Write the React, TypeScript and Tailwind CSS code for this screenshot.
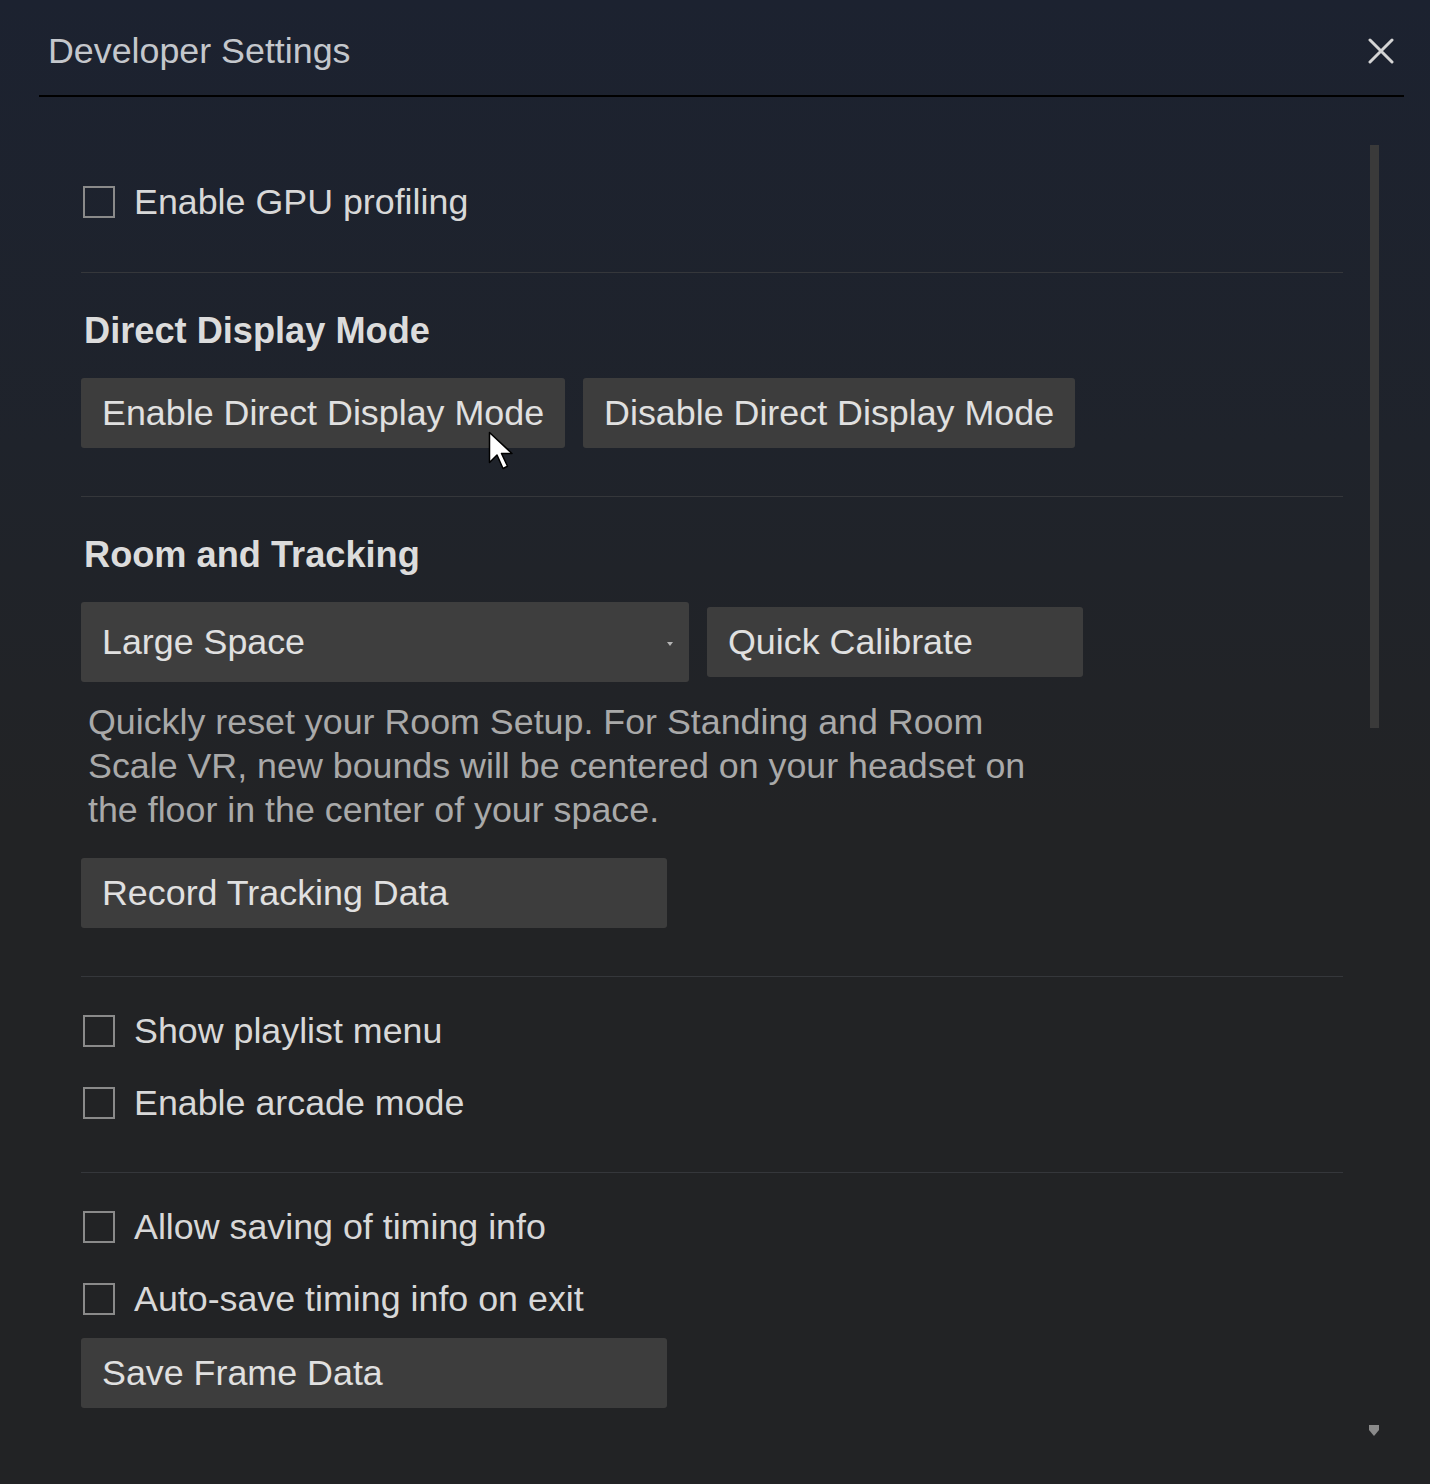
const Checkbox = ({ label }: { label: string }) => (
  <label className="flex h-[40px] items-center gap-[19px]">
    <span className="ml-[2px] block h-[32px] w-[32px] shrink-0 border-2 border-[#8a8a8a]" />
    <span className="text-[35.8px] leading-[40px] text-[#d8d8d8]">{label}</span>
  </label>
);

const Button = ({ label, className = "" }: { label: string; className?: string }) => (
  <button
    type="button"
    className={`flex h-[70px] items-center rounded-[3px] bg-[#3d3d3d] px-[21px] text-left text-[35.85px] leading-[40px] text-[#e0e0e0] ${className}`}
  >
    {label}
  </button>
);

const Divider = ({ className = "" }: { className?: string }) => (
  <div className={`h-px w-full bg-[#35373b] ${className}`} />
);

const Heading = ({ children, className = "" }: { children: string; className?: string }) => (
  <h2 className={`pl-[3px] text-[36.2px] font-bold leading-[41px] text-[#dcdcdc] ${className}`}>{children}</h2>
);

export default function App() {
  return (
    <div className="relative h-[1484px] w-[1430px] overflow-hidden bg-[linear-gradient(180deg,#1c2230_0%,#1f232b_30%,#222325_55%,#222325_100%)] font-['Liberation_Sans',Arial,sans-serif]">
      {/* header */}
      <div className="ml-[39px] mr-[26px] flex h-[97px] items-start justify-between border-b-2 border-black">
        <h1 className="pl-[9px] pt-[31px] text-[35.8px] leading-[41px] text-[#c4c7cc]">Developer Settings</h1>
        <button type="button" className="mr-[10px] mt-[38px] text-[#d4d4d4]">
          <svg width="26" height="26" viewBox="0 0 26 26" fill="none" stroke="currentColor" strokeWidth="3" strokeLinecap="round">
            <path d="M2 2 L24 24 M24 2 L2 24" />
          </svg>
        </button>
      </div>

      <div className="flex">
        {/* content */}
        <div className="ml-[81px] flex w-[1262px] flex-col items-start pt-[85px]">
          <Checkbox label="Enable GPU profiling" />
          <Divider className="mt-[50px]" />

          <Heading className="mt-[37px]">Direct Display Mode</Heading>
          <div className="mt-[27px] flex gap-[18px]">
            <Button label="Enable Direct Display Mode" />
            <Button label="Disable Direct Display Mode" />
          </div>
          <Divider className="mt-[48px]" />

          <Heading className="mt-[37px]">Room and Tracking</Heading>
          <div className="mt-[27px] flex items-center gap-[18px]">
            <div className="flex h-[80px] w-[608px] items-center justify-between rounded-[3px] bg-[#3e3e3e] pl-[21px] pr-[16px] text-[35.8px] leading-[40px] text-[#e0e0e0]">
              <span>Large Space</span>
              <svg width="6" height="4" viewBox="0 0 6 4" className="mt-[4px]">
                <path d="M0 0 H6 L3 4 Z" fill="#b4b4b4" />
              </svg>
            </div>
            <Button label="Quick Calibrate" className="w-[376px]" />
          </div>
          <p className="mt-[18px] w-[960px] pl-[7px] text-[35.8px] leading-[44px] text-[#a9a9a9]">
            Quickly reset your Room Setup. For Standing and Room Scale VR, new bounds will be centered on your headset on the floor in the center of your space.
          </p>
          <Button label="Record Tracking Data" className="mt-[26px] w-[586px]" />
          <Divider className="mt-[48px]" />

          <div className="mt-[34px] flex flex-col gap-[32px]">
            <Checkbox label="Show playlist menu" />
            <Checkbox label="Enable arcade mode" />
          </div>
          <Divider className="mt-[49px]" />

          <div className="mt-[34px] flex flex-col gap-[32px]">
            <Checkbox label="Allow saving of timing info" />
            <Checkbox label="Auto-save timing info on exit" />
          </div>
          <Button label="Save Frame Data" className="mt-[19px] w-[586px]" />
        </div>

        {/* scrollbar */}
        <div className="ml-[26px] flex h-[1387px] w-[10px] flex-col items-center justify-between pt-[48px]">
          <div className="h-[583px] w-[9px] bg-[#3a3a3a]" />
          <svg width="10" height="11" viewBox="0 0 10 11" className="mb-[48px]">
            <path d="M0 0 H10 V5 L5 11 L0 5 Z" fill="#8a8a8a" />
          </svg>
        </div>
      </div>

      {/* mouse pointer */}
      <svg className="absolute left-[488px] top-[431px]" width="27" height="42" viewBox="0 0 18 28">
        <path d="M1 1 L1 21 L6 16 L10 25 L13 23.5 L9 15 L16 15 Z" fill="#ffffff" stroke="#000000" strokeWidth="1" strokeLinejoin="round" />
      </svg>
    </div>
  );
}
